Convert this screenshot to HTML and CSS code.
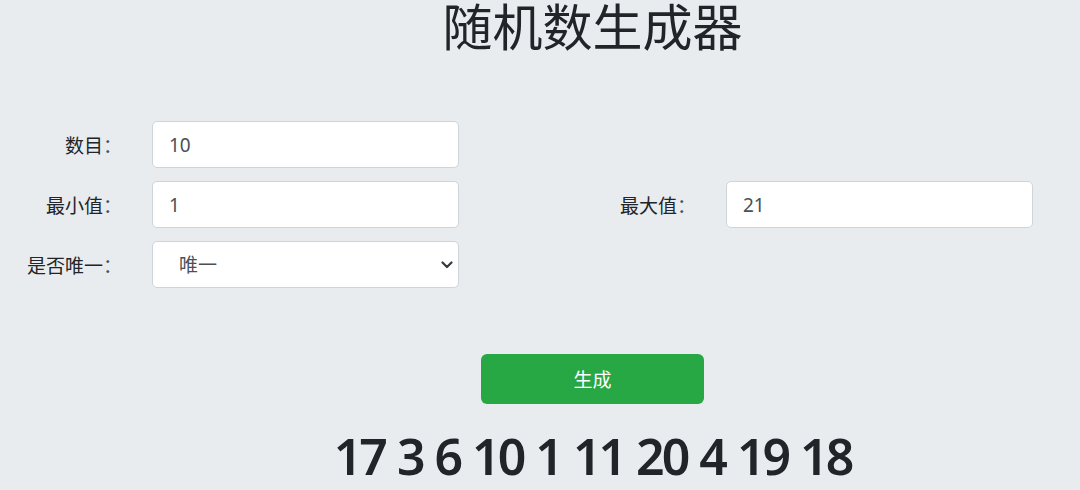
FILE: index.html
```html
<!DOCTYPE html>
<html lang="zh-CN">
<head>
<meta charset="utf-8">
<title>随机数生成器</title>
<link rel="stylesheet" href="styles.css">
</head>
<body>
<main class="page">
  <h1 class="title centered">随机数生成器</h1>
  <form class="form">
    <label class="label" for="count">数目<span class="colon">：</span></label>
    <input class="control" id="count" type="text" value="10">
    <span class="empty"></span>
    <span class="empty"></span>

    <label class="label" for="min">最小值<span class="colon">：</span></label>
    <input class="control" id="min" type="text" value="1">
    <label class="label" for="max">最大值<span class="colon">：</span></label>
    <input class="control" id="max" type="text" value="21">

    <label class="label" for="unique">是否唯一<span class="colon">：</span></label>
    <select class="control select" id="unique">
      <option>唯一</option>
      <option>不唯一</option>
    </select>
  </form>
  <div class="actions centered">
    <button class="btn" type="button">生成</button>
  </div>
  <div class="result centered">17 3 6 10 1 11 20 4 19 18</div>
</main>
</body>
</html>
```
FILE: styles.css
```css
html, body {
  margin: 0;
  padding: 0;
  background: #e9ecef;
}
body {
  width: 1080px;
  height: 490px;
  overflow: hidden;
  font-family: "Noto Sans", "Noto Sans CJK SC", sans-serif;
  color: #212529;
}
.page {
  width: 1080px;
}
.centered {
  padding-left: 105px;
}
.title {
  margin: 0;
  text-align: center;
  font-size: 50px;
  font-weight: 400;
  line-height: 54px;
  color: #212529;
}
.form {
  display: grid;
  grid-template-columns: 152px 307px 267px 307px;
  grid-auto-rows: 47px;
  row-gap: 13px;
  margin-top: 67px;
}
.label {
  align-self: center;
  text-align: right;
  padding-right: 30px;
  font-size: 19px;
  color: #212529;
}
.colon {
  font-family: "Noto Sans CJK JP", sans-serif;
  color: #495057;
}
.control {
  box-sizing: border-box;
  width: 307px;
  height: 47px;
  margin: 0;
  padding: 0 16px;
  border: 1px solid #ced4da;
  border-radius: 5px;
  background: #fff;
  font-family: "Noto Sans", "Noto Sans CJK SC", sans-serif;
  font-size: 19px;
  color: #495057;
  outline: none;
}
.select {
  appearance: none;
  -webkit-appearance: none;
  padding-left: 26px;
  background-image: url("data:image/svg+xml,%3Csvg xmlns='http://www.w3.org/2000/svg' width='12' height='8' viewBox='0 0 12 8'%3E%3Cpath d='M1.5 1.5 6 6l4.5-4.5' fill='none' stroke='%23343a40' stroke-width='2.2' stroke-linecap='round' stroke-linejoin='round'/%3E%3C/svg%3E");
  background-repeat: no-repeat;
  background-position: right 5px center;
  background-size: 12px 8px;
}
.actions {
  display: flex;
  justify-content: center;
  margin-top: 66px;
}
.btn {
  width: 223px;
  height: 50px;
  border: none;
  border-radius: 6px;
  background: #28a745;
  color: #fff;
  font-family: "Noto Sans", "Noto Sans CJK SC", sans-serif;
  font-size: 19px;
}
.result {
  margin-top: 22px;
  text-align: center;
  font-size: 50px;
  font-weight: 600;
  line-height: 60px;
  letter-spacing: -3px;
  word-spacing: 2px;
  color: #212529;
}
```
